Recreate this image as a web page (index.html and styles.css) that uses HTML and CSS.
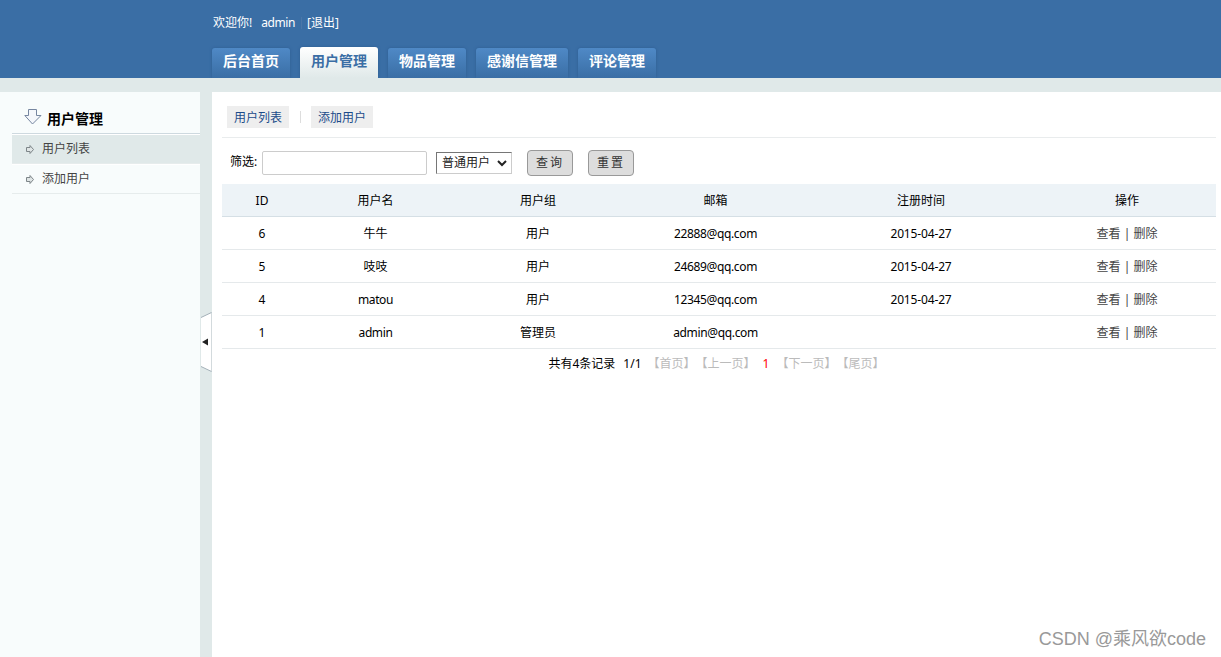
FILE: index.html
```html
<!DOCTYPE html>
<html lang="zh-CN">
<head>
    <meta charset="utf-8">
    <title>用户管理</title>
    <link rel="stylesheet" href="styles.css">
</head>
<body>
    <div class="header">
        <div class="welcome">
            <span>欢迎你!</span>
            <span class="name">admin</span>
            <i class="split"></i>
            <a href="#">[退出]</a>
        </div>
        <ul class="nav">
            <li><a href="#">后台首页</a></li>
            <li class="on"><a href="#">用户管理</a></li>
            <li><a href="#">物品管理</a></li>
            <li><a href="#">感谢信管理</a></li>
            <li><a href="#">评论管理</a></li>
        </ul>
    </div>

    <div class="content">
        <div class="left">
            <h3>
                <svg width="18" height="16" viewBox="0 0 18 16"><path d="M4.5 .5h8v6h4.500L8.500 15 .800 6.500h3.700z" fill="#f4f7fb" stroke="#7686a0"/></svg>
                <span>用户管理</span>
            </h3>
            <ul class="menu">
                <li class="on">
                    <svg width="9" height="9" viewBox="0 0 9 9"><path d="M.500 2.500h3.500v-2l3.500 4-3.500 4v-2H.500z" fill="#dfe5e5" stroke="#7d8588"/></svg>
                    <a href="#">用户列表</a>
                </li>
                <li>
                    <svg width="9" height="9" viewBox="0 0 9 9"><path d="M.500 2.500h3.500v-2l3.500 4-3.500 4v-2H.500z" fill="#dfe5e5" stroke="#7d8588"/></svg>
                    <a href="#">添加用户</a>
                </li>
            </ul>
        </div>

        <div class="bar">
            <svg class="toggle" width="12" height="60" viewBox="0 0 12 60">
                <path d="M1 5.500L11.500 .500v59L1 54.500z" fill="#fff"/>
                <path d="M11.500 .500v59" stroke="#d3dadd"/>
                <path d="M1 5.500L11.500 .500M11.500 59.500L1 54.500" stroke="#a3b0b8"/>
                <path d="M2 30l6-3.500v7z" fill="#222"/>
            </svg>
        </div>

        <div class="right">
            <div class="subnav">
                <a href="#">用户列表</a>
                <i></i>
                <a href="#">添加用户</a>
            </div>
            <form class="search">
                <label for="keyword">筛选:</label>
                <input type="text" id="keyword">
                <div class="select">
                    <span>普通用户</span>
                    <svg width="10" height="7" viewBox="0 0 10 7"><path d="M1 1l4 4 4-4" fill="none" stroke="#222" stroke-width="2"/></svg>
                </div>
                <button type="button">查询</button>
                <button type="button">重置</button>
            </form>
            <table>
                <colgroup>
                    <col class="c-id"><col class="c-name"><col class="c-group"><col class="c-mail"><col class="c-time"><col class="c-op">
                </colgroup>
                <thead>
                    <tr>
                        <th>ID</th>
                        <th>用户名</th>
                        <th>用户组</th>
                        <th>邮箱</th>
                        <th>注册时间</th>
                        <th>操作</th>
                    </tr>
                </thead>
                <tbody>
                    <tr>
                        <td>6</td>
                        <td>牛牛</td>
                        <td>用户</td>
                        <td class="mail">22888@qq.com</td>
                        <td class="time">2015-04-27</td>
                        <td class="op"><a href="#">查看</a> | <a href="#">删除</a></td>
                    </tr>
                    <tr>
                        <td>5</td>
                        <td>吱吱</td>
                        <td>用户</td>
                        <td class="mail">24689@qq.com</td>
                        <td class="time">2015-04-27</td>
                        <td class="op"><a href="#">查看</a> | <a href="#">删除</a></td>
                    </tr>
                    <tr>
                        <td>4</td>
                        <td class="name">matou</td>
                        <td>用户</td>
                        <td class="mail">12345@qq.com</td>
                        <td class="time">2015-04-27</td>
                        <td class="op"><a href="#">查看</a> | <a href="#">删除</a></td>
                    </tr>
                    <tr>
                        <td>1</td>
                        <td class="name">admin</td>
                        <td>管理员</td>
                        <td class="mail">admin@qq.com</td>
                        <td class="time"></td>
                        <td class="op"><a href="#">查看</a> | <a href="#">删除</a></td>
                    </tr>
                </tbody>
            </table>
            <div class="page">
                <span class="total">共有4条记录</span>
                <span class="count">1/1</span>
                <span class="off">【首页】</span>
                <span class="off">【上一页】</span>
                <span class="current">1</span>
                <span class="off">【下一页】</span>
                <span class="off">【尾页】</span>
            </div>
        </div>
    </div>

    <div class="watermark">CSDN @乘风欲code</div>
</body>
</html>
```

FILE: styles.css
```css
* {
    margin: 0;
    padding: 0;
    box-sizing: border-box;
}

body {
    height: 657px;
    overflow: hidden;
    display: flex;
    flex-direction: column;
    font: 12px/18px "Noto Sans", "Noto Sans CJK SC", sans-serif;
    color: #000;
    background: #fff;
}

a {
    color: inherit;
    text-decoration: none;
}

ul {
    list-style: none;
}

svg {
    display: block;
    flex: none;
}

/* header */
.header {
    flex: none;
    height: 78px;
    padding: 14px 0 0 212px;
    background: #3a6ea5;
}

.welcome {
    display: flex;
    height: 18px;
    padding-left: 1px;
    color: #fff;
    white-space: nowrap;
}

.welcome .name {
    margin-left: 9px;
}

.name {
    letter-spacing: -0.4px;
}

.welcome .split {
    width: 1px;
    height: 12px;
    margin: 3px 5px 0 6px;
    background: #4a76a8;
}

.nav {
    display: flex;
    align-items: flex-end;
    height: 46px;
    gap: 10px;
}

.nav li {
    height: 30px;
    padding: 0 11px;
    border-radius: 3px 3px 0 0;
    background: linear-gradient(#4f89c6, #3a6ea5);
    box-shadow: 0 0 3px #2f5d92;
    clip-path: inset(-3px -3px 0 -3px);
    color: #fff;
    font-size: 14px;
    font-weight: bold;
    line-height: 25px;
    white-space: nowrap;
}

.nav .on {
    height: 31px;
    background: linear-gradient(#fff, #e0e9e9);
    color: #3a6ea5;
    line-height: 27px;
}

/* layout */
.content {
    flex: 1;
    display: flex;
    border-top: 14px solid #e0e9e9;
}

.left {
    width: 200px;
    padding: 12px 0 0 12px;
    background: #f8fcfc;
}

.left h3 {
    display: flex;
    align-items: center;
    gap: 5px;
    height: 30px;
    padding-left: 12px;
    border-bottom: 1px solid #ced9df;
    font-size: 14px;
    line-height: 20px;
}

.left h3 svg {
    margin-top: -3px;
}

.menu li {
    display: flex;
    align-items: center;
    gap: 7px;
    height: 30px;
    padding-left: 14px;
    border-top: 1px solid #fff;
    border-bottom: 1px solid #e6ecec;
    color: #444;
}

.menu .on {
    background: #e0e9e9;
}

.bar {
    display: flex;
    align-items: flex-start;
    width: 12px;
    padding-top: 220px;
    background: #e0e9e9;
}

.right {
    flex: 1;
    padding: 0 5px 0 10px;
}

.subnav {
    display: flex;
    align-items: center;
    height: 46px;
    padding: 4px 0 0 5px;
    border-bottom: 1px solid #e9eced;
}

.subnav a {
    height: 22px;
    padding: 0 7px;
    background: #eee;
    color: #1b4b8a;
    line-height: 24px;
}

.subnav i {
    width: 1px;
    height: 12px;
    margin: 0 10px 0 11px;
    background: #ddd;
}

/* search */
.search {
    display: flex;
    align-items: center;
    height: 46px;
    padding: 4px 0 0 8px;
}

.search label {
    width: 32px;
    margin-top: -2px;
    white-space: nowrap;
}

.search input {
    width: 165px;
    height: 24px;
    border: 1px solid #ccc;
    border-radius: 2px;
}

.select {
    display: flex;
    align-items: center;
    justify-content: space-between;
    width: 76px;
    height: 22px;
    margin-left: 9px;
    padding: 0 4px 1px 5px;
    border: 1px solid;
    border-color: #767676 #ccc #ccc #767676;
    color: #222;
}

.select svg {
    margin-top: 2px;
}

.search button {
    width: 46px;
    height: 26px;
    margin-left: 15px;
    border: 1px solid #999;
    border-radius: 4px;
    background: #ddd;
    color: #333;
    font: 12px/22px "Noto Sans", "Noto Sans CJK SC", sans-serif;
    letter-spacing: 2px;
}

/* list */
table {
    width: 994px;
    table-layout: fixed;
    border-collapse: separate;
    border-spacing: 0;
}

th, td {
    height: 33px;
    padding-top: 2px;
    border-bottom: 1px solid #e5e9eb;
    font-weight: normal;
    text-align: center;
    white-space: nowrap;
}

th {
    background: #edf3f7;
    border-bottom-color: #d5dfe5;
}

.c-id { width: 80px; }
.c-name { width: 147px; }
.c-group { width: 178px; }
.c-mail { width: 177px; }
.c-time { width: 234px; }
.c-op { width: 178px; }

.mail {
    letter-spacing: -0.35px;
}

.time {
    letter-spacing: -0.15px;
}

.op {
    color: #444;
}

.page {
    display: flex;
    justify-content: center;
    padding: 6px 5px 0 0;
    white-space: nowrap;
}

.total {
    margin-right: 8px;
}

.count {
    margin-right: 6px;
}

.off {
    color: #bbb;
}

.current {
    margin: 0 7px;
    color: #f00;
}

.watermark {
    position: absolute;
    right: 15px;
    bottom: 5px;
    color: #999;
    font: 18px/26px "Liberation Sans", "Noto Sans CJK SC", sans-serif;
}
```
